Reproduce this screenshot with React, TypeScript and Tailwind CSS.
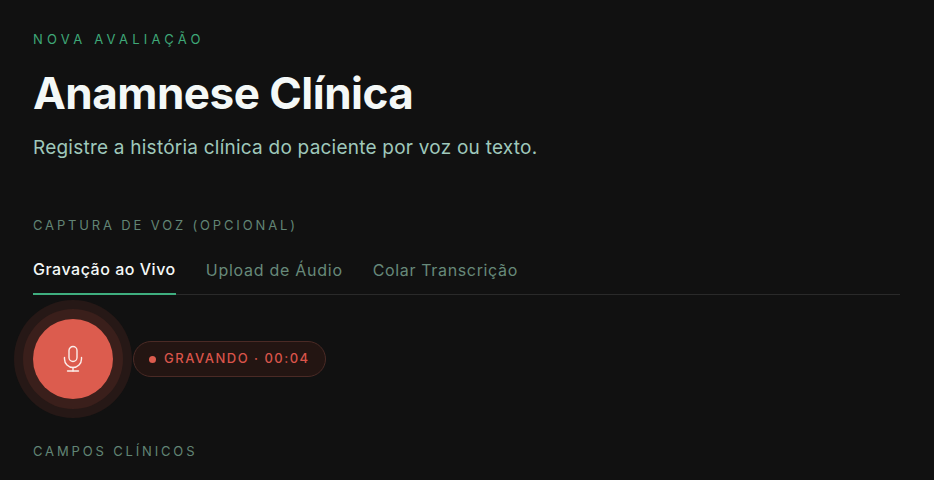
export default function App() {
    return (
        <div className="h-[480px] overflow-hidden bg-[#111111] pl-[33px] pr-[34px] pt-[31px] font-['Inter','Liberation_Sans',sans-serif]">
            <div className="text-[13px] leading-[16px] tracking-[4.25px] text-[#3fa878]">NOVA AVALIAÇÃO</div>
            <h1 className="mt-[19px] text-[44px] leading-[54px] font-bold tracking-[-0.5px] text-[#f4f8f7]">Anamnese Clínica</h1>
            <p className="mt-[14px] text-[19px] leading-[28px] tracking-[0.23px] text-[#9fc8bb]">Registre a história clínica do paciente por voz ou texto.</p>

            <div className="mt-[55px] text-[13px] leading-[16px] tracking-[2.85px] text-[#628575]">CAPTURA DE VOZ (OPCIONAL)</div>

            <div className="mt-[19px] flex gap-[30px] border-b border-[#2a2a2a] text-[16px] leading-[24px]">
                <button className="-mb-px border-b-2 border-[#3fae7f] pt-[5px] pb-[12px] font-medium tracking-[0.52px] text-[#f4f8f7]">Gravação ao Vivo</button>
                <button className="pt-[5px] pb-[12px] tracking-[0.73px] text-[#67897a]">Upload de Áudio</button>
                <button className="pt-[5px] pb-[12px] tracking-[0.65px] text-[#67897a]">Colar Transcrição</button>
            </div>

            <div className="mt-[24px] flex items-center gap-[20px]">
                <button className="flex h-[80px] w-[80px] items-center justify-center rounded-full bg-[#dc5c4e] text-[#fbeeea] shadow-[0_0_0_10px_#3a1f1b,0_0_0_19px_#261816]">
                    <svg width="24" height="28" viewBox="0 0 24 28" fill="none" stroke="currentColor" strokeWidth="1.4" strokeLinecap="round">
                        <rect x="8" y="1.5" width="8" height="15" rx="4" />
                        <path d="M3.5 12.5v1.5a8.5 8.5 0 0 0 17 0v-1.5" />
                        <path d="M12 22.5v3.5" />
                        <path d="M6.5 26h11" />
                    </svg>
                </button>
                <div className="flex h-[36px] items-center gap-[8px] rounded-full border border-[#4a2a25] bg-[#231512] px-[15px] text-[13px] font-medium tracking-[1.5px] text-[#d9544a]">
                    <span className="h-[7px] w-[7px] rounded-full bg-[#dc5c4e]" />
                    GRAVANDO · 00:04
                </div>
            </div>

            <div className="mt-[44px] text-[13px] leading-[16px] tracking-[2.85px] text-[#628575]">CAMPOS CLÍNICOS</div>
        </div>
    );
}
